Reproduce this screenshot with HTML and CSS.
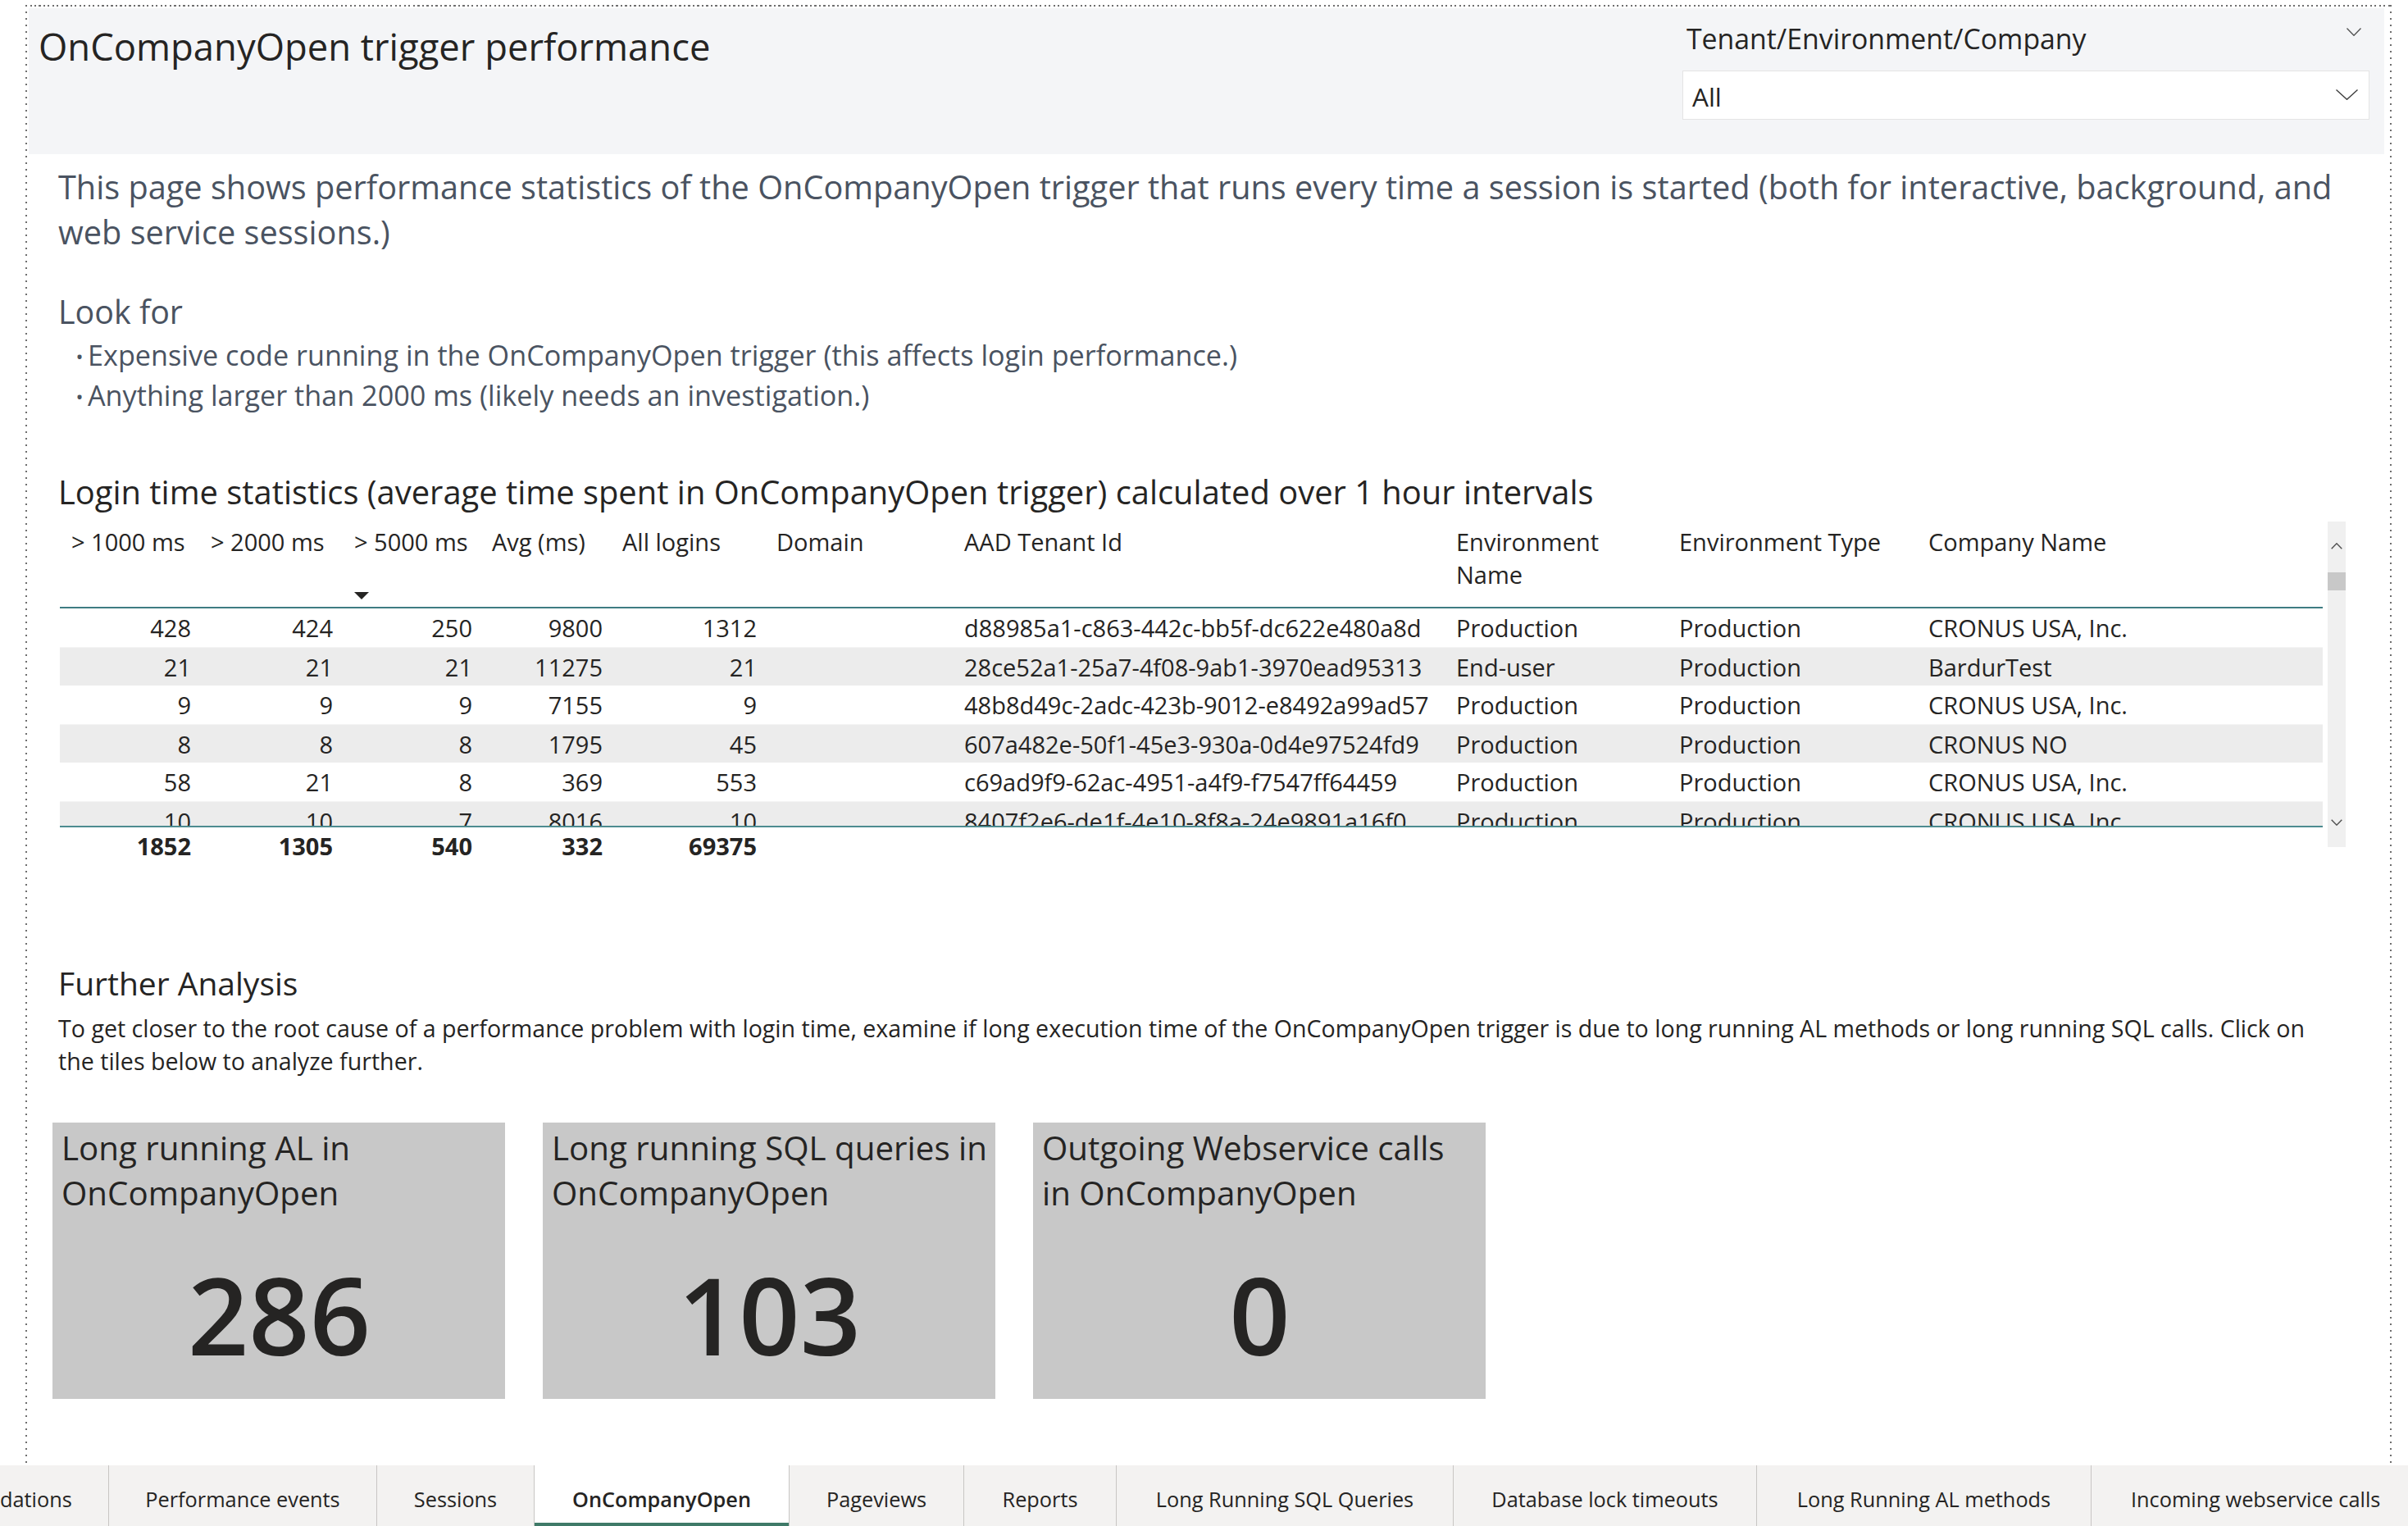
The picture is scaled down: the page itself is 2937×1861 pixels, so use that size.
FILE: index.html
```html
<!DOCTYPE html>
<html lang="en">
<head>
<meta charset="utf-8">
<title>OnCompanyOpen trigger performance</title>
<link rel="stylesheet" href="styles.css">
</head>
<body>
<div class="frame">
  <header class="header">
    <h1 class="title">OnCompanyOpen trigger performance</h1>
    <div class="slicer">
      <div class="slicer-head">
        <span class="slicer-label">Tenant/Environment/Company</span>
        <svg class="chev-sm" viewBox="0 0 18 10"><polyline points="0.5,0.5 9,9.3 17.5,0.5"/></svg>
      </div>
      <div class="dropdown">
        <span class="dd-value">All</span>
        <svg class="chev" viewBox="0 0 27 13"><polyline points="0.5,0.5 13.5,12.3 26.5,0.5"/></svg>
      </div>
    </div>
  </header>

  <main class="content">
    <p class="intro">This page shows performance statistics of the OnCompanyOpen trigger that runs every time a session is started (both for interactive, background, and<br>web service sessions.)</p>
    <h2 class="look">Look for</h2>
    <ul class="bullets">
      <li>Expensive code running in the OnCompanyOpen trigger (this affects login performance.)</li>
      <li>Anything larger than 2000 ms (likely needs an investigation.)</li>
    </ul>

    <h2 class="table-title">Login time statistics (average time spent in OnCompanyOpen trigger) calculated over 1 hour intervals</h2>
    <div class="table-wrap">
      <div class="table">
        <div class="row thead">
          <div class="cell">&gt; 1000 ms</div>
          <div class="cell">&gt; 2000 ms</div>
          <div class="cell sorted">&gt; 5000 ms<span class="sort"></span></div>
          <div class="cell">Avg (ms)</div>
          <div class="cell">All logins</div>
          <div class="cell">Domain</div>
          <div class="cell">AAD Tenant Id</div>
          <div class="cell">Environment<br>Name</div>
          <div class="cell">Environment Type</div>
          <div class="cell">Company Name</div>
        </div>
        <div class="tbody">
          <div class="row">
            <div class="cell num">428</div><div class="cell num">424</div><div class="cell num">250</div><div class="cell num">9800</div><div class="cell num">1312</div>
            <div class="cell"></div><div class="cell">d88985a1-c863-442c-bb5f-dc622e480a8d</div><div class="cell">Production</div><div class="cell">Production</div><div class="cell">CRONUS USA, Inc.</div>
          </div>
          <div class="row">
            <div class="cell num">21</div><div class="cell num">21</div><div class="cell num">21</div><div class="cell num">11275</div><div class="cell num">21</div>
            <div class="cell"></div><div class="cell">28ce52a1-25a7-4f08-9ab1-3970ead95313</div><div class="cell">End-user</div><div class="cell">Production</div><div class="cell">BardurTest</div>
          </div>
          <div class="row">
            <div class="cell num">9</div><div class="cell num">9</div><div class="cell num">9</div><div class="cell num">7155</div><div class="cell num">9</div>
            <div class="cell"></div><div class="cell">48b8d49c-2adc-423b-9012-e8492a99ad57</div><div class="cell">Production</div><div class="cell">Production</div><div class="cell">CRONUS USA, Inc.</div>
          </div>
          <div class="row">
            <div class="cell num">8</div><div class="cell num">8</div><div class="cell num">8</div><div class="cell num">1795</div><div class="cell num">45</div>
            <div class="cell"></div><div class="cell">607a482e-50f1-45e3-930a-0d4e97524fd9</div><div class="cell">Production</div><div class="cell">Production</div><div class="cell">CRONUS NO</div>
          </div>
          <div class="row">
            <div class="cell num">58</div><div class="cell num">21</div><div class="cell num">8</div><div class="cell num">369</div><div class="cell num">553</div>
            <div class="cell"></div><div class="cell">c69ad9f9-62ac-4951-a4f9-f7547ff64459</div><div class="cell">Production</div><div class="cell">Production</div><div class="cell">CRONUS USA, Inc.</div>
          </div>
          <div class="row">
            <div class="cell num">10</div><div class="cell num">10</div><div class="cell num">7</div><div class="cell num">8016</div><div class="cell num">10</div>
            <div class="cell"></div><div class="cell">8407f2e6-de1f-4e10-8f8a-24e9891a16f0</div><div class="cell">Production</div><div class="cell">Production</div><div class="cell">CRONUS USA, Inc.</div>
          </div>
        </div>
        <div class="row tfoot">
          <div class="cell num">1852</div><div class="cell num">1305</div><div class="cell num">540</div><div class="cell num">332</div><div class="cell num">69375</div>
          <div class="cell"></div><div class="cell"></div><div class="cell"></div><div class="cell"></div><div class="cell"></div>
        </div>
      </div>
      <div class="scrollbar">
        <svg class="sb-up" viewBox="0 0 14 8"><polyline points="0.7,7.3 7,0.8 13.3,7.3"/></svg>
        <div class="sb-thumb"></div>
        <svg class="sb-down" viewBox="0 0 14 8"><polyline points="0.7,0.7 7,7.2 13.3,0.7"/></svg>
      </div>
    </div>

    <h2 class="fa-title">Further Analysis</h2>
    <p class="fa-text">To get closer to the root cause of a performance problem with login time, examine if long execution time of the OnCompanyOpen trigger is due to long running AL methods or long running SQL calls. Click on<br>the tiles below to analyze further.</p>

    <div class="tiles">
      <div class="tile">
        <div class="tile-title">Long running AL in<br>OnCompanyOpen</div>
        <div class="tile-value">286</div>
      </div>
      <div class="tile">
        <div class="tile-title">Long running SQL queries in<br>OnCompanyOpen</div>
        <div class="tile-value">103</div>
      </div>
      <div class="tile">
        <div class="tile-title">Outgoing Webservice calls<br>in OnCompanyOpen</div>
        <div class="tile-value">0</div>
      </div>
    </div>
  </main>
</div>

<nav class="tabs">
  <div class="tab first">dations</div>
  <div class="tab">Performance events</div>
  <div class="tab">Sessions</div>
  <div class="tab active">OnCompanyOpen</div>
  <div class="tab">Pageviews</div>
  <div class="tab">Reports</div>
  <div class="tab">Long Running SQL Queries</div>
  <div class="tab">Database lock timeouts</div>
  <div class="tab">Long Running AL methods</div>
  <div class="tab last">Incoming webservice calls</div>
</nav>
</body>
</html>
```

FILE: styles.css
```css
* { box-sizing: border-box; }

html, body {
  margin: 0;
  padding: 0;
  background: #ffffff;
}

body {
  width: 2937px;
  height: 1861px;
  overflow: hidden;
  font-family: "Open Sans", "Noto Sans", sans-serif;
  color: #252423;
}

h1, h2, p, ul { margin: 0; padding: 0; font-weight: 400; }

/* ---------- report frame ---------- */
.frame {
  position: relative;
  margin: 6px 0 0 31px;
  width: 2886px;
  height: 1781px;
  padding: 4px 9px 0 4px;
}

.frame::before {
  content: "";
  position: absolute;
  inset: 0;
  pointer-events: none;
  background:
    repeating-linear-gradient(90deg, #6f6f6f 0 2px, transparent 2px 5.5px) 0 0 / 100% 2px no-repeat,
    repeating-linear-gradient(180deg, #6f6f6f 0 2px, transparent 2px 8px) 0 0 / 2px 100% no-repeat,
    repeating-linear-gradient(180deg, #6f6f6f 0 2px, transparent 2px 8px) 100% 0 / 2px 100% no-repeat;
}

/* ---------- header ---------- */
.header {
  height: 178px;
  background: #f4f5f7;
  display: flex;
  justify-content: space-between;
  align-items: flex-start;
  padding: 11px 18px 0 12px;
}

.title {
  margin-top: 5px;
  font-size: 45.4px;
  line-height: 60px;
  color: #252423;
}

.slicer {
  width: 838px;
  margin-top: 3px;
}

.slicer-head {
  display: flex;
  justify-content: space-between;
  align-items: flex-start;
  padding: 0 10px 0 5px;
}

.slicer-label {
  font-size: 33.8px;
  line-height: 46px;
  color: #252423;
}

.chev-sm {
  width: 18px;
  height: 10px;
  margin-top: 10px;
  fill: none;
  stroke: #505050;
  stroke-width: 1.3;
}

.dropdown {
  margin-top: 16px;
  height: 60px;
  background: #ffffff;
  border: 1px solid #e4e4e4;
  display: flex;
  justify-content: space-between;
  align-items: center;
  padding: 4px 13px 0 11px;
}

.dd-value {
  font-size: 31.5px;
  line-height: 40px;
  color: #252423;
}

.chev {
  width: 27px;
  height: 13px;
  margin-top: -5px;
  fill: none;
  stroke: #404040;
  stroke-width: 1.4;
}

/* ---------- content ---------- */
.content {
  padding: 13px 20px 0 36px;
}

.intro {
  font-size: 39.7px;
  line-height: 55px;
  color: #4a5361;
  white-space: nowrap;
}

.look {
  margin-top: 42px;
  font-size: 39.4px;
  line-height: 54px;
  color: #4a5361;
}

.bullets {
  margin-top: 2px;
  list-style: none;
  padding-left: 16px;
  font-size: 34.2px;
  line-height: 47px;
  color: #4a5361;
}

.bullets li::before {
  content: "\2022";
  display: inline-block;
  width: 20px;
  font-size: 24px;
  vertical-align: 2px;
  text-align: center;
}

.table-title {
  margin-top: 66px;
  font-size: 39.9px;
  line-height: 54px;
  color: #252423;
}

/* ---------- table ---------- */
.table-wrap {
  margin-top: 9px;
  margin-left: 2px;
  width: 2790px;
  display: flex;
  align-items: flex-start;
  gap: 6px;
}

.table {
  width: 2760px;
  flex: 0 0 2760px;
  font-size: 29px;
  color: #252423;
}

.row {
  display: grid;
  grid-template-columns: 172px 173px 170px 159px 188px 229px 600px 272px 304px 493px;
}

.cell {
  padding: 0 12px;
  white-space: nowrap;
  overflow: hidden;
}

.cell.num { text-align: right; }

.thead {
  height: 106px;
  border-bottom: 2px solid #3e7c82;
  padding-top: 5px;
  line-height: 40px;
}

.thead .cell {
  display: flex;
  flex-direction: column;
  align-items: flex-start;
}

.thead .cell:first-child { padding-left: 14px; }
.thead .sorted { padding-left: 14px; }

.sort {
  margin-top: auto;
  margin-bottom: 9px;
  width: 0;
  height: 0;
  border-left: 9px solid transparent;
  border-right: 9px solid transparent;
  border-top: 9px solid #252423;
}

.tbody {
  height: 265px;
  overflow: hidden;
}

.tbody .row {
  height: 47px;
  line-height: 47px;
}

.tbody .row:nth-child(even) {
  background: #ececec;
  border-top: 1px solid #f4f4f4;
}

.tfoot {
  border-top: 2px solid #4d8c90;
  line-height: 46px;
  font-weight: 700;
}

.scrollbar {
  flex: 0 0 22px;
  width: 22px;
  height: 397px;
  background: #f0f0f0;
  display: flex;
  flex-direction: column;
  align-items: center;
}

.sb-up, .sb-down {
  width: 14px;
  height: 8px;
  fill: none;
  stroke: #505050;
  stroke-width: 1.4;
}

.sb-up { margin-top: 26px; }

.sb-thumb {
  margin-top: 28px;
  width: 22px;
  height: 22px;
  background: #c8c8c8;
}

.sb-down { margin-top: auto; margin-bottom: 26px; }

/* ---------- further analysis ---------- */
.fa-title {
  margin-top: 118px;
  font-size: 39px;
  line-height: 52px;
  color: #252423;
}

.fa-text {
  margin-top: 9px;
  font-size: 28.6px;
  line-height: 40px;
  color: #252423;
  white-space: nowrap;
}

.tiles {
  margin-top: 55px;
  margin-left: -7px;
  display: flex;
  gap: 46px;
}

.tile {
  width: 552px;
  height: 337px;
  background: #c8c8c8;
  padding: 3px 10px 0 11px;
  display: flex;
  flex-direction: column;
}

.tile-title {
  font-size: 40.3px;
  line-height: 55px;
  color: #252423;
  white-space: nowrap;
}

.tile-value {
  margin-top: 56px;
  font-size: 130px;
  line-height: 130px;
  font-weight: 600;
  text-align: center;
  color: #252423;
}

/* ---------- page tabs ---------- */
.tabs {
  height: 74px;
  background: #f3f2f1;
  display: flex;
  overflow: hidden;
}

.tab {
  flex: 0 0 auto;
  height: 74px;
  padding-top: 8px;
  line-height: 66px;
  font-size: 25.3px;
  color: #252423;
  text-align: center;
  border-left: 1px solid #c8c6c4;
  white-space: nowrap;
  overflow: hidden;
}

.tab.first { width: 132px; border-left: none; text-align: right; padding-right: 46px; }
.tab:nth-child(2) { width: 327px; }
.tab:nth-child(3) { width: 192px; }
.tab:nth-child(4) { width: 311px; }
.tab:nth-child(5) { width: 213px; }
.tab:nth-child(6) { width: 186px; }
.tab:nth-child(7) { width: 411px; }
.tab:nth-child(8) { width: 370px; }
.tab:nth-child(9) { width: 408px; }
.tab.last { width: 420px; text-align: left; padding-left: 48px; }

.tab.active {
  background: #ffffff;
  font-weight: 600;
  box-shadow: inset 0 -4px 0 #3f7a68;
}
```
